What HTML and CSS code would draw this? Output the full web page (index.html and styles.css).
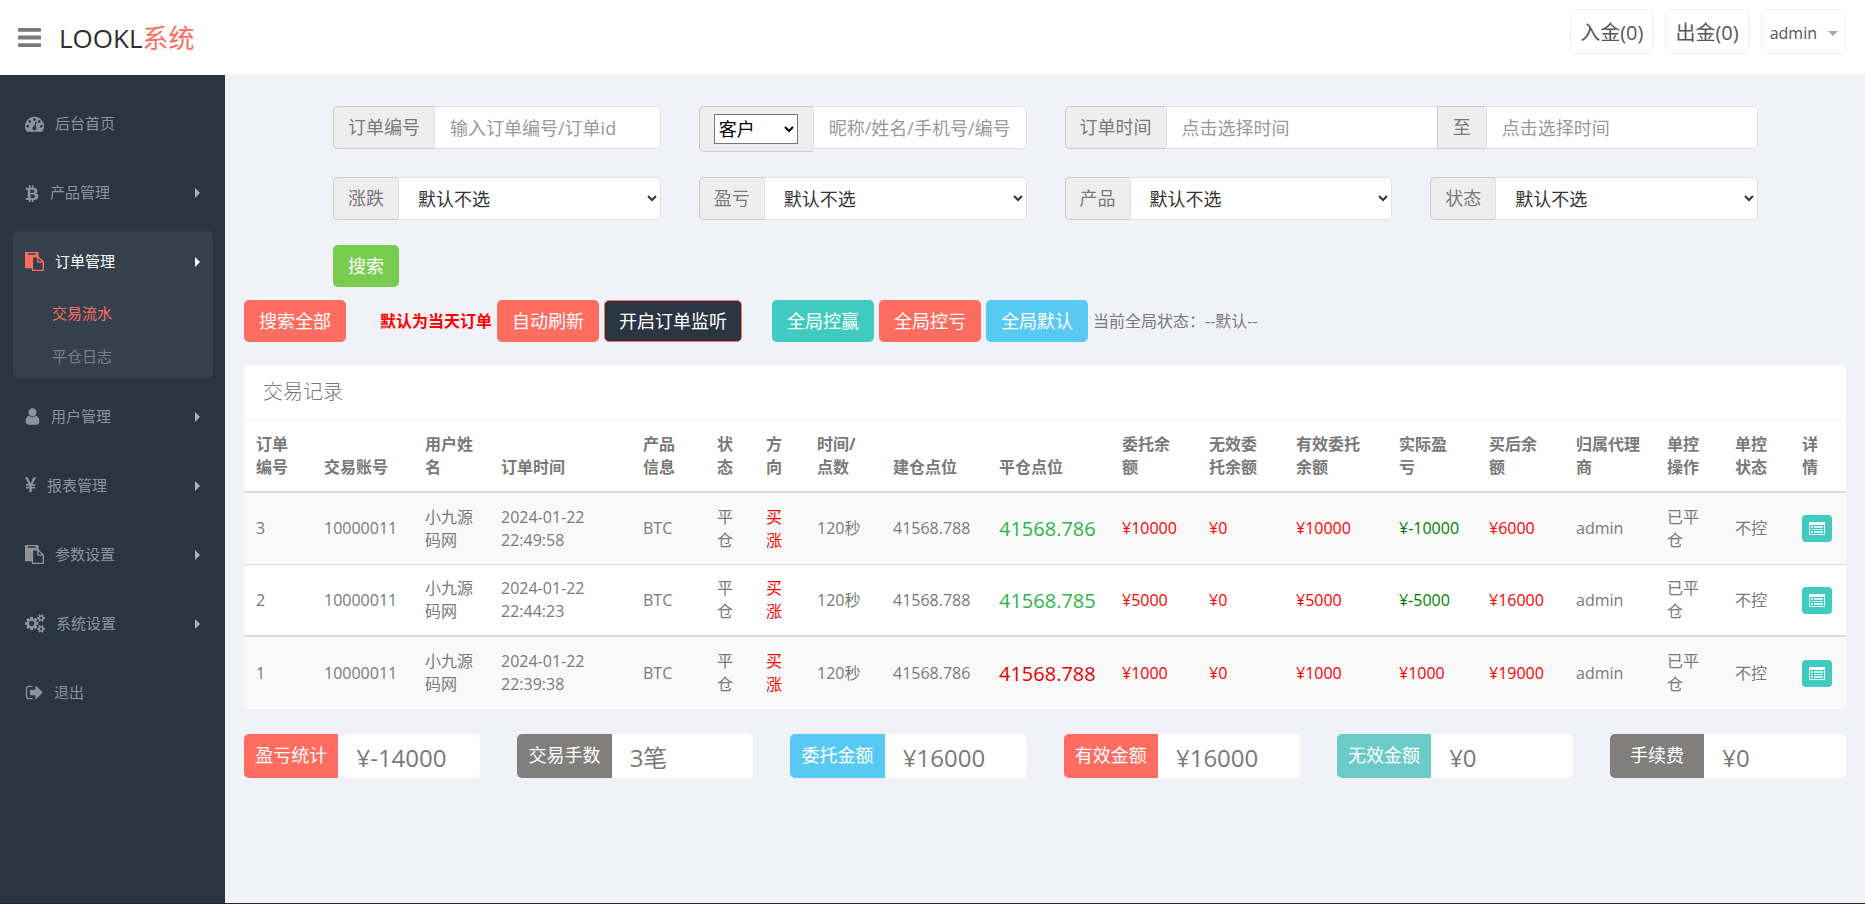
FILE: index.html
```html
<!DOCTYPE html>
<html lang="zh-CN">
<head>
<meta charset="utf-8">
<meta name="viewport" content="width=device-width, initial-scale=1">
<title>LOOKL系统</title>
<link rel="stylesheet" href="styles.css">
</head>
<body>
<svg class="sprite" aria-hidden="true">
  <symbol id="i-bars" viewBox="128 128 1536 1536"><path d="M1664 1344v128q0 26-19 45t-45 19h-1408q-26 0-45-19t-19-45v-128q0-26 19-45t45-19h1408q26 0 45 19t19 45zm0-512v128q0 26-19 45t-45 19h-1408q-26 0-45-19t-19-45v-128q0-26 19-45t45-19h1408q26 0 45 19t19 45zm0-512v128q0 26-19 45t-45 19h-1408q-26 0-45-19t-19-45v-128q0-26 19-45t45-19h1408q26 0 45 19t19 45z"/></symbol>
  <symbol id="i-dash" viewBox="0 0 1792 1792"><path d="M384 1152q0-53-37.5-90.5t-90.5-37.5-90.5 37.5-37.5 90.5 37.5 90.5 90.5 37.5 90.5-37.5 37.5-90.5zm192-448q0-53-37.5-90.5t-90.5-37.5-90.5 37.5-37.5 90.5 37.5 90.5 90.5 37.5 90.5-37.5 37.5-90.5zm428 481l101-382q6-26-7.5-48.5t-38.5-29.5-48 6.5-30 39.5l-101 382q-60 5-107 43.5t-63 98.5q-20 77 20 146t117 89 146-20 89-117q16-60-6-117t-72-91zm660-33q0-53-37.5-90.5t-90.5-37.5-90.5 37.5-37.5 90.5 37.5 90.5 90.5 37.5 90.5-37.5 37.5-90.5zm-640-640q0-53-37.5-90.5t-90.5-37.5-90.5 37.5-37.5 90.5 37.5 90.5 90.5 37.5 90.5-37.5 37.5-90.5zm448 192q0-53-37.5-90.5t-90.5-37.5-90.5 37.5-37.5 90.5 37.5 90.5 90.5 37.5 90.5-37.5 37.5-90.5zm320 448q0 261-141 483-19 29-54 29h-1402q-35 0-54-29-141-221-141-483 0-182 71-348t191-286 286-191 348-71 348 71 286 191 191 286 71 348z"/></symbol>
  <symbol id="i-btc" viewBox="256 0 1280 1792"><path d="M1399 710q18 182-131 258 117 28 175 103t45 214q-7 71-32.5 125t-64.5 89-97 58.5-121.5 34.5-145.5 15v255h-154v-251q-80 0-122-1v252h-154v-255q-18 0-54-.5t-55-.5h-200l31-183h111q50 0 58-51v-402h16q-6-1-16-1v-287q-13-68-89-68h-111v-164l212 1q64 0 97-1v-252h154v247q82-2 122-2v-245h154v252q79 7 140 22.5t113 45 82.5 78 36.5 114.5zm-215 545q0-36-15-64t-37-46-57.5-30.5-65.5-18.5-74-9-69-3-64.5 1-47.5 1v338q8 0 37 .5t48 .5 53-1.5 58.5-4 57-8.5 55.5-14 47.5-21 39.5-30 24.5-40 9.5-51zm-71-476q0-33-12.5-58.5t-30.5-42-48-28-55-16.5-61.5-8-58-2.5-54 1-39.5.5v307q5 0 34.5.5t46.5 0 50-2 55-5.5 51.5-11 48.5-18.5 37-27 27-38.5 9-51z"/></symbol>
  <symbol id="i-paste" viewBox="0 0 1792 1792"><path d="M768 1664h896v-640h-416q-40 0-68-28t-28-68v-416h-384v1152zm256-1440v-64q0-13-9.5-22.5t-22.5-9.5h-704q-13 0-22.5 9.5t-9.5 22.5v64q0 13 9.5 22.5t22.5 9.5h704q13 0 22.5-9.5t9.5-22.5zm256 672h299l-299-299v299zm512 128v672q0 40-28 68t-68 28h-960q-40 0-68-28t-28-68v-160h-544q-40 0-68-28t-28-68v-1344q0-40 28-68t68-28h1088q40 0 68 28t28 68v328q21 13 36 28l408 408q28 28 48 76t20 88z"/></symbol>
  <symbol id="i-user" viewBox="256 0 1280 1792"><path d="M1536 1399q0 109-62.5 187t-150.5 78h-854q-88 0-150.5-78t-62.5-187q0-85 8.5-160.5t31.5-152 58.5-131 94-89 134.5-34.5q131 128 313 128t313-128q76 0 134.5 34.5t94 89 58.5 131 31.5 152 8.5 160.5zm-256-887q0 159-112.5 271.5t-271.5 112.5-271.5-112.5-112.5-271.5 112.5-271.5 271.5-112.5 271.5 112.5 112.5 271.5z"/></symbol>
  <symbol id="i-yen" viewBox="382 0 1027 1792"><path d="M985.5 1536h-172q-13 0-22.5-9t-9.5-23v-330h-288q-13 0-22.5-9t-9.5-23v-103q0-13 9.5-22.5t22.5-9.5h288v-85h-288q-13 0-22.5-9t-9.5-23v-104q0-13 9.5-22.5t22.5-9.5h214l-321-578q-8-16 0-32 10-16 28-16h194q19 0 29 18l215 425q19 38 56 125 10-24 30.5-68t27.5-61l191-420q8-19 29-19h191q17 0 27 16 9 14 1 31l-313 579h215q13 0 22.5 9.5t9.5 22.5v104q0 14-9.5 23t-22.5 9h-290v85h290q13 0 22.5 9.5t9.5 22.5v103q0 14-9.5 23t-22.5 9h-290v330q0 13-9.5 22.5t-22.5 9.5z"/></symbol>
  <symbol id="i-cogs" viewBox="0 0 1920 1792"><path d="M896 896q0-106-75-181t-181-75-181 75-75 181 75 181 181 75 181-75 75-181zm768 512q0-52-38-90t-90-38-90 38-38 90q0 53 37.5 90.5t90.5 37.5 90.5-37.5 37.5-90.5zm0-1024q0-52-38-90t-90-38-90 38-38 90q0 53 37.5 90.5t90.5 37.5 90.5-37.5 37.5-90.5zm-384 421v185q0 10-7 19.5t-16 10.5l-155 24q-11 35-32 76 34 48 90 115 7 11 7 20 0 12-7 19-23 30-82.5 89.5t-78.5 59.5q-11 0-21-7l-115-90q-37 19-77 31-11 108-23 155-7 24-30 24h-186q-11 0-20-7.5t-10-17.5l-23-153q-34-10-75-31l-118 89q-7 7-20 7-11 0-21-8-144-133-144-160 0-9 7-19 10-14 41-53t47-61q-23-44-35-82l-152-24q-10-1-17-9.5t-7-19.5v-185q0-10 7-19.5t16-10.5l155-24q11-35 32-76-34-48-90-115-7-11-7-20 0-12 7-20 22-30 82-89t79-59q11 0 21 7l115 90q34-18 77-32 11-108 23-154 7-24 30-24h186q11 0 20 7.5t10 17.5l23 153q34 10 75 31l118-89q8-7 20-7 11 0 21 8 144 133 144 160 0 8-7 19-12 16-42 54t-45 60q23 48 34 82l152 23q10 2 17 10.5t7 19.5zm640 533v140q0 16-149 31-12 27-30 52 51 113 51 138 0 4-4 7-122 71-124 71-8 0-46-47t-52-68q-20 2-30 2t-30-2q-14 21-52 68t-46 47q-2 0-124-71-4-3-4-7 0-25 51-138-18-25-30-52-149-15-149-31v-140q0-16 149-31 13-29 30-52-51-113-51-138 0-4 4-7 4-2 35-20t59-34 30-16q8 0 46 46.500t52 67.500q20-2 30-2t30 2q51-71 92-112l6-2q4 0 124 70 4 3 4 7 0 25-51 138 17 23 30 52 149 15 149 31zm0-1024v140q0 16-149 31-12 27-30 52 51 113 51 138 0 4-4 7-122 71-124 71-8 0-46-47t-52-68q-20 2-30 2t-30-2q-14 21-52 68t-46 47q-2 0-124-71-4-3-4-7 0-25 51-138-18-25-30-52-149-15-149-31v-140q0-16 149-31 13-29 30-52-51-113-51-138 0-4 4-7 4-2 35-20t59-34 30-16q8 0 46 46.500t52 67.500q20-2 30-2t30 2q51-71 92-112l6-2q4 0 124 70 4 3 4 7 0 25-51 138 17 23 30 52 149 15 149 31z"/></symbol>
  <symbol id="i-out" viewBox="0 0 1664 1792"><path d="M704 1440q0 4 1 20t.5 26.5-3 23.500-10 19.500-20.500 6.500h-320q-119 0-203.500-84.500t-84.500-203.500v-704q0-119 84.500-203.500t203.500-84.500h320q13 0 22.500 9.500t9.500 22.500q0 4 1 20t.5 26.500-3 23.500-10 19.500-20.500 6.500h-320q-66 0-113 47t-47 113v704q0 66 47 113t113 47h312l11.500 1 11.500 3 8 5.500 7 9 2 13.500zm928-544q0 26-19 45l-544 544q-19 19-45 19t-45-19-19-45v-288h-448q-26 0-45-19t-19-45v-384q0-26 19-45t45-19h448v-288q0-26 19-45t45-19 45 19l544 544q19 19 19 45z"/></symbol>
  <symbol id="i-right" viewBox="0 0 5 10"><path d="M0 0l5 5-5 5z"/></symbol>
  <symbol id="i-down" viewBox="0 0 10 5"><path d="M0 0h10L5 5z"/></symbol>
  <symbol id="i-list" viewBox="0 0 16 13"><path fill-rule="evenodd" d="M1 0h14q1 0 1 1v11q0 1-1 1H1q-1 0-1-1V1q0-1 1-1zM1 3v9h14V3z"/><path opacity=".75" d="M2 4h2v2H2zM5 4h9v2H5zM2 7h2v1H2zM5 7h9v1H5zM2 9h2v2H2zM5 9h9v2H5z"/></symbol>
</svg>

<header class="topbar">
  <button class="toggle" type="button" aria-label="菜单"><svg class="icon-bars"><use href="#i-bars"/></svg></button>
  <a class="brand" href="#">LOOKL<span class="brand-accent">系统</span></a>
  <nav class="top-links">
    <a class="top-link" href="#">入金(0)</a>
    <a class="top-link" href="#">出金(0)</a>
    <a class="top-link user-link" href="#">admin<svg class="icon-down"><use href="#i-down"/></svg></a>
  </nav>
</header>

<div class="shell">
  <nav class="sidebar">
    <ul class="menu">
      <li><a class="menu-link" href="#"><svg class="mi w19"><use href="#i-dash"/></svg>后台首页</a></li>
      <li><a class="menu-link" href="#"><svg class="mi w14"><use href="#i-btc"/></svg>产品管理<svg class="arrow"><use href="#i-right"/></svg></a></li>
      <li class="open">
        <a class="menu-link" href="#"><svg class="mi w19"><use href="#i-paste"/></svg>订单管理<svg class="arrow"><use href="#i-right"/></svg></a>
        <ul class="submenu">
          <li><a class="sub-link current" href="#">交易流水</a></li>
          <li><a class="sub-link" href="#">平仓日志</a></li>
        </ul>
      </li>
      <li><a class="menu-link" href="#"><svg class="mi w15"><use href="#i-user"/></svg>用户管理<svg class="arrow"><use href="#i-right"/></svg></a></li>
      <li><a class="menu-link" href="#"><svg class="mi w11"><use href="#i-yen"/></svg>报表管理<svg class="arrow"><use href="#i-right"/></svg></a></li>
      <li><a class="menu-link" href="#"><svg class="mi w19"><use href="#i-paste"/></svg>参数设置<svg class="arrow"><use href="#i-right"/></svg></a></li>
      <li><a class="menu-link" href="#"><svg class="mi w20"><use href="#i-cogs"/></svg>系统设置<svg class="arrow"><use href="#i-right"/></svg></a></li>
      <li><a class="menu-link" href="#"><svg class="mi w18"><use href="#i-out"/></svg>退出</a></li>
    </ul>
  </nav>

  <main class="content">
    <form class="filters">
      <div class="group"><label class="addon" for="f-id">订单编号</label><input class="field" id="f-id" type="text" placeholder="输入订单编号/订单id"></div>
      <div class="group"><span class="addon addon-select"><select class="mini" aria-label="查询类型"><option>客户</option></select></span><input class="field" type="text" aria-label="客户" placeholder="昵称/姓名/手机号/编号"></div>
      <div class="group wide"><label class="addon" for="f-from">订单时间</label><input class="field" id="f-from" type="text" placeholder="点击选择时间"><label class="addon mid" for="f-to">至</label><input class="field" id="f-to" type="text" placeholder="点击选择时间"></div>
      <div class="group"><label class="addon" for="f-dir">涨跌</label><select class="field pick" id="f-dir"><option>默认不选</option></select></div>
      <div class="group"><label class="addon" for="f-pl">盈亏</label><select class="field pick" id="f-pl"><option>默认不选</option></select></div>
      <div class="group"><label class="addon" for="f-prod">产品</label><select class="field pick" id="f-prod"><option>默认不选</option></select></div>
      <div class="group"><label class="addon" for="f-state">状态</label><select class="field pick" id="f-state"><option>默认不选</option></select></div>
      <div class="submit"><button class="btn green" type="submit">搜索</button></div>
    </form>

    <div class="actions">
      <button class="btn red" type="button">搜索全部</button>
      <strong class="notice">默认为当天订单</strong>
      <button class="btn red" type="button">自动刷新</button>
      <button class="btn dark" type="button">开启订单监听</button>
      <button class="btn teal control" type="button">全局控赢</button>
      <button class="btn red" type="button">全局控亏</button>
      <button class="btn blue" type="button">全局默认</button>
      <span>当前全局状态：--默认--</span>
    </div>

    <section class="panel">
      <h1 class="panel-title">交易记录</h1>
      <table class="records">
        <colgroup><col class="c68"><col class="c101"><col class="c76"><col class="c142"><col class="c74"><col class="c49"><col class="c51"><col class="c76"><col class="c106"><col class="c123"><col class="c87"><col class="c87"><col class="c103"><col class="c90"><col class="c87"><col class="c91"><col class="c68"><col class="c67"><col class="c56"></colgroup>
        <thead>
          <tr><th>订单编号</th><th>交易账号</th><th>用户姓名</th><th>订单时间</th><th>产品<br>信息</th><th>状态</th><th>方向</th><th>时间/点数</th><th>建仓点位</th><th>平仓点位</th><th>委托余额</th><th>无效委托余额</th><th>有效委托余额</th><th>实际盈<br>亏</th><th>买后余额</th><th>归属代理商</th><th>单控操作</th><th>单控状态</th><th>详<br>情</th></tr>
        </thead>
        <tbody>
          <tr><td>3</td><td>10000011</td><td>小九源码网</td><td>2024-01-22 22:49:58</td><td>BTC</td><td>平仓</td><td class="up">买涨</td><td>120秒</td><td>41568.788</td><td class="price fall">41568.786</td><td class="up">¥10000</td><td class="up">¥0</td><td class="up">¥10000</td><td class="down">¥-10000</td><td class="up">¥6000</td><td>admin</td><td>已平仓</td><td>不控</td><td><button class="detail" type="button" aria-label="详情"><svg class="icon-list"><use href="#i-list"/></svg></button></td></tr>
          <tr><td>2</td><td>10000011</td><td>小九源码网</td><td>2024-01-22 22:44:23</td><td>BTC</td><td>平仓</td><td class="up">买涨</td><td>120秒</td><td>41568.788</td><td class="price fall">41568.785</td><td class="up">¥5000</td><td class="up">¥0</td><td class="up">¥5000</td><td class="down">¥-5000</td><td class="up">¥16000</td><td>admin</td><td>已平仓</td><td>不控</td><td><button class="detail" type="button" aria-label="详情"><svg class="icon-list"><use href="#i-list"/></svg></button></td></tr>
          <tr><td>1</td><td>10000011</td><td>小九源码网</td><td>2024-01-22 22:39:38</td><td>BTC</td><td>平仓</td><td class="up">买涨</td><td>120秒</td><td>41568.786</td><td class="price rise">41568.788</td><td class="up">¥1000</td><td class="up">¥0</td><td class="up">¥1000</td><td class="up">¥1000</td><td class="up">¥19000</td><td>admin</td><td>已平仓</td><td>不控</td><td><button class="detail" type="button" aria-label="详情"><svg class="icon-list"><use href="#i-list"/></svg></button></td></tr>
        </tbody>
      </table>
    </section>

    <section class="stats">
      <div class="stat"><span class="stat-name red">盈亏统计</span><span class="stat-value">¥-14000</span></div>
      <div class="stat"><span class="stat-name gray">交易手数</span><span class="stat-value">3笔</span></div>
      <div class="stat"><span class="stat-name blue">委托金额</span><span class="stat-value">¥16000</span></div>
      <div class="stat"><span class="stat-name red">有效金额</span><span class="stat-value">¥16000</span></div>
      <div class="stat"><span class="stat-name mint">无效金额</span><span class="stat-value">¥0</span></div>
      <div class="stat"><span class="stat-name gray">手续费</span><span class="stat-value">¥0</span></div>
    </section>
  </main>
</div>
</body>
</html>
```

FILE: styles.css
```css
* { box-sizing: border-box; }

body {
  display: flex;
  flex-direction: column;
  min-height: 100vh;
  margin: 0;
  border-bottom: 1px solid #20242b;
  background: #f1f2f7;
  color: #797979;
  font: 16px/23px "Open Sans", "Noto Sans CJK SC", sans-serif;
}

ul { margin: 0; padding: 0; list-style: none; }
a { color: inherit; text-decoration: none; }
button, input, select { font: inherit; }
svg { fill: currentColor; }
.sprite { position: absolute; width: 0; height: 0; }

/* top bar */
.topbar {
  display: flex;
  align-items: center;
  height: 75px;
  padding: 0 19px 0 18px;
  border-bottom: 1px solid #f1f2f7;
  background: #fff;
}
.toggle { padding: 0; border: 0; background: none; color: #797979; }
.icon-bars { display: block; width: 23px; height: 23px; }
.brand { margin-left: 18px; padding-top: 2px; color: #2e2e2e; font-size: 26px; line-height: 36px; }
.brand-accent { color: #ff6c60; }
.top-links { display: flex; align-items: flex-start; align-self: flex-start; gap: 12px; margin: 9px 0 0 auto; }
.top-link {
  display: flex;
  align-items: center;
  height: 45px;
  padding: 2px 9px 0;
  border: 1px solid #eff0f6;
  border-radius: 5px;
  color: #555;
  font-size: 20px;
}
.user-link { gap: 11px; padding: 4px 7px 0 8px; font-size: 16px; }
.icon-down { width: 10px; height: 5px; color: #a9a9bd; }

/* sidebar */
.shell { display: flex; flex: 1; }
.sidebar { flex: 0 0 225px; background: #2a3542; }
.menu { display: flex; flex-direction: column; gap: 8px; padding: 18px 12px 0 13px; color: #8c939a; font-size: 15px; }
.menu-link { display: flex; align-items: center; height: 61px; padding: 0 13px 0 12px; }
.mi { height: 19px; margin-right: 11px; }
.w11 { width: 11px; }
.w14 { width: 14px; }
.w15 { width: 15px; }
.w18 { width: 18px; }
.w19 { width: 19px; }
.w20 { width: 20px; }
.arrow { width: 5px; height: 10px; margin-left: auto; color: #aeb2b7; }
.open { border-radius: 5px; background: #35404d; }
.open > .menu-link, .open .arrow { color: #fff; }
.open .mi { color: #ff6c60; }
.sub-link { display: flex; align-items: center; height: 43px; padding-left: 39px; color: #76808a; }
.sub-link.current { color: #ff6c60; }

/* filters */
.content { flex: 1; min-width: 0; padding: 31px 19px 0; }
.filters { display: grid; grid-template-columns: repeat(4, minmax(0, 1fr)); gap: 0 38px; padding: 0 88px 0 89px; font-size: 18px; }
.group { display: flex; align-items: flex-start; height: 71px; }
.wide { grid-column: span 2; }
.addon {
  display: flex;
  align-items: center;
  height: 43px;
  padding: 0 14px;
  border: 1px solid #ccc;
  border-right: 0;
  border-radius: 5px 0 0 5px;
  background: #eee;
  white-space: nowrap;
}
.addon-select { height: 46px; padding: 0 15px 0 14px; }
.mid { padding: 0 15px; border-radius: 0; }
.mini { width: 84px; height: 30px; border: 1px solid #767676; background: #fff; color: #000; }
.field {
  flex: 1;
  min-width: 0;
  height: 43px;
  padding: 0 15px;
  border: 1px solid #e2e2e4;
  border-radius: 0 5px 5px 0;
  background: #fff;
  color: #333;
}
.field:has(+ .mid) { border-right: 0; border-radius: 0; }
.field::placeholder { color: #999; opacity: 1; }
.pick { padding-right: 0; }
.submit { display: flex; grid-column: 1 / -1; height: 52px; align-items: flex-start; }
.submit .btn { margin-top: -3px; }

.btn {
  height: 42px;
  padding: 0 14px;
  border: 1px solid transparent;
  border-radius: 5px;
  color: #fff;
  font-size: 18px;
}
.green { background: #78cd51; }
.red { background: #ff6c60; }
.teal { background: #41cac0; }
.blue { background: #58c9f3; }
.mint { background: #6ccac9; }
.gray { background: #807f7d; }
.dark { border-color: #ff6c60; background: #2a3542; }

.actions { display: flex; align-items: center; gap: 5px; height: 42px; margin-bottom: 23px; }
.notice { margin-left: 29px; color: #f00; }
.control { margin-left: 25px; }

/* records */
.panel { overflow: hidden; border-radius: 5px 5px 0 0; background: #fff; }
.panel-title {
  height: 55px;
  margin: 0;
  padding: 0 19px;
  border-bottom: 1px solid #eff2f7;
  font-size: 20px;
  font-weight: 300;
  line-height: 54px;
}
.records { width: 100%; table-layout: fixed; border-collapse: separate; border-spacing: 0; text-align: left; }
.c49 { width: 49px; }
.c51 { width: 51px; }
.c56 { width: 56px; }
.c67 { width: 67px; }
.c68 { width: 68px; }
.c74 { width: 74px; }
.c76 { width: 76px; }
.c87 { width: 87px; }
.c90 { width: 90px; }
.c91 { width: 91px; }
.c101 { width: 101px; }
.c103 { width: 103px; }
.c106 { width: 106px; }
.c123 { width: 123px; }
.c142 { width: 142px; }
.records th { height: 73px; padding: 12px; border-bottom: 2px solid #ddd; vertical-align: bottom; }
.records td { height: 72px; padding: 12px; border-bottom: 1px solid #ddd; vertical-align: middle; }
.records tr:nth-child(2) td { border-bottom-width: 2px; }
.records tr:last-child td { border-bottom: 0; }
.records tbody tr:nth-child(odd) { background: #f9f9f9; }
.records .up { color: #f00; }
.records .down { color: #008000; }
.records .price { font-size: 20px; }
.records .fall { color: #2fb44a; }
.records .rise { color: #e60000; }
.records td:last-child { padding-right: 0; }
.detail { display: block; width: 30px; height: 27px; padding: 0 7px; border: 0; border-radius: 4px; background: #41cac0; color: #fff; }
.icon-list { display: block; width: 16px; height: 13px; }

/* totals */
.stats { display: grid; grid-template-columns: repeat(6, minmax(0, 1fr)); gap: 37px; margin-top: 25px; }
.stat { display: flex; height: 44px; overflow: hidden; border-radius: 5px; background: #fff; }
.stat-name { flex: 0 0 40%; color: #fff; font-size: 18px; line-height: 42px; text-align: center; }
.stat-value { padding-left: 18px; font-size: 24px; line-height: 48px; }
```
